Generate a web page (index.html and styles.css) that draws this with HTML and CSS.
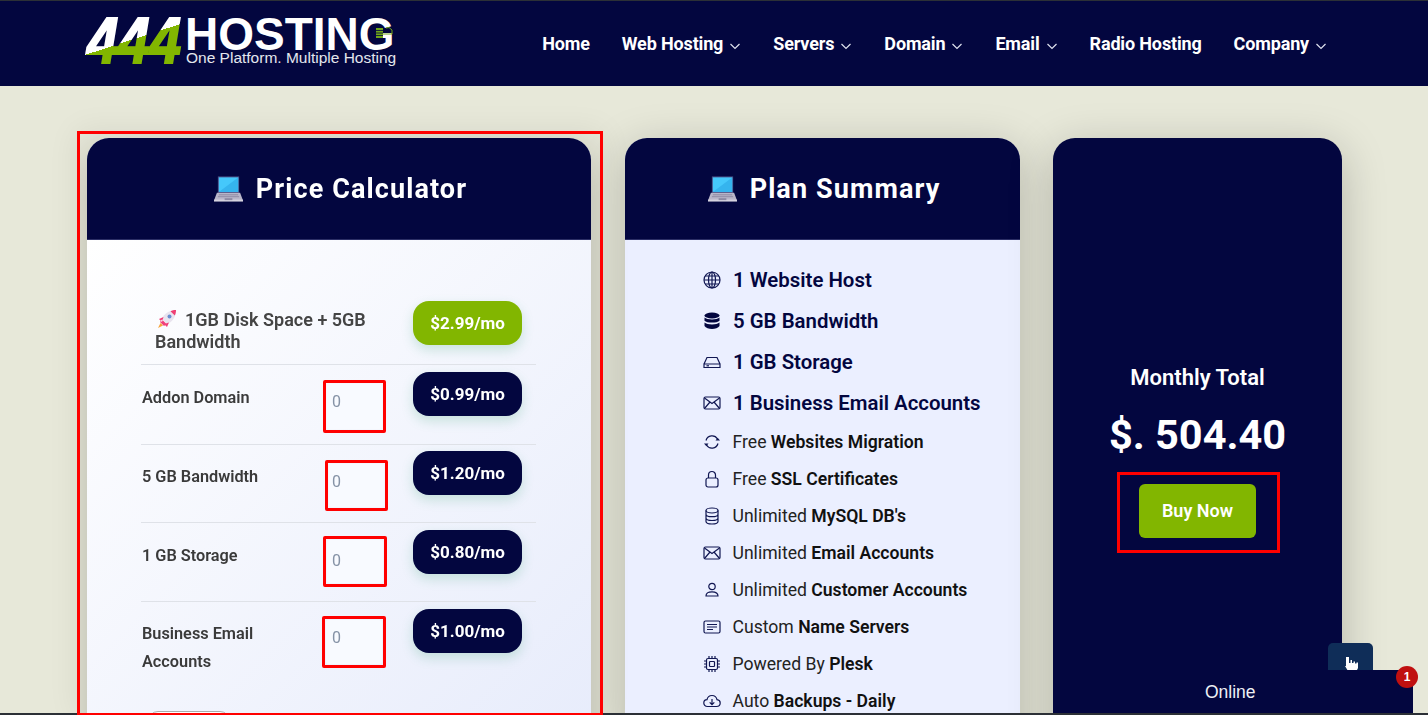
FILE: index.html
```html
<!DOCTYPE html>
<html lang="en">
<head>
    <meta charset="UTF-8">
    <meta name="viewport" content="width=device-width, initial-scale=1.0">
    <title>444 Hosting - Price Calculator</title>
    <link rel="stylesheet" href="styles.css">
</head>
<body>
    <!-- shared icons -->
    <svg class="sprite" width="0" height="0">
        <symbol id="laptop" viewBox="0 0 30 27">
            <rect x="4" y="1" width="22" height="17" fill="#4a4f86"/>
            <rect x="5" y="2" width="20" height="15" fill="#45c8fb"/>
            <path d="M5 17 L25 2 V17Z" fill="#35b4ee"/>
            <path d="M3 18 H27 L30 26 H0Z" fill="#b9b6c9"/>
            <rect x="0" y="25" width="30" height="2" fill="#d5d3df"/>
            <path d="M5 20 H25 M4 22 H26" stroke="#8d8aa3"/>
            <rect x="11" y="23.5" width="8" height="2" fill="#8d8aa3"/>
        </symbol>
        <symbol id="chevron" viewBox="0 0 12 12">
            <path d="M1.5 4 L6 8.5 L10.5 4" fill="none" stroke="currentColor" stroke-width="1.2"/>
        </symbol>
        <symbol id="envelope" viewBox="0 0 18 18">
            <rect x="1" y="3" width="16" height="12" rx="1.5" fill="none" stroke="currentColor" stroke-width="1.2"/>
            <path d="M1.5 4 L9 9.5 L16.500 4 M1.500 14.500 L7 8 M16.500 14.500 L11 8" fill="none" stroke="currentColor" stroke-width="1.2"/>
        </symbol>
    </svg>

    <header class="topbar">
        <a class="logo" href="#">
            <svg class="logo-mark" viewBox="0 0 96 48" width="96" height="48">
                <defs>
                    <linearGradient id="logoFill" gradientUnits="userSpaceOnUse" x1="50" y1="23" x2="52.6" y2="32.1">
                        <stop offset="0" stop-color="#ffffff"/>
                        <stop offset="0" stop-color="#82b600"/>
                    </linearGradient>
                </defs>
                <text class="logo-num" x="0" y="46" transform="scale(.88 1)" fill="url(#logoFill)" stroke="url(#logoFill)">444</text>
            </svg>
            <span class="logo-text">
                <span class="logo-name">HOSTING</span>
                <span class="logo-tag">One Platform. Multiple Hosting</span>
            </span>
            <svg class="logo-server" viewBox="0 0 18 14" width="18" height="14">
                <rect x="1" y="3" width="7" height="10" fill="#6fa61a"/>
                <path d="M1 5.500 H8 M1 8 H8 M1 10.500 H8" stroke="#03063f" stroke-width=".8"/>
                <path d="M8 9 H17 V5 Q14 1 11 3" fill="none" stroke="#6fa61a" stroke-width="1"/>
            </svg>
        </a>
        <nav class="nav">
            <a href="#">Home</a>
            <a href="#">Web Hosting <svg class="chev"><use href="#chevron"/></svg></a>
            <a href="#">Servers <svg class="chev"><use href="#chevron"/></svg></a>
            <a href="#">Domain <svg class="chev"><use href="#chevron"/></svg></a>
            <a href="#">Email <svg class="chev"><use href="#chevron"/></svg></a>
            <a href="#">Radio Hosting</a>
            <a href="#">Company <svg class="chev"><use href="#chevron"/></svg></a>
        </nav>
    </header>

    <main class="content">
        <div class="calc-frame">
            <section class="card">
                <h2 class="card-head"><svg class="laptop"><use href="#laptop"/></svg>Price Calculator</h2>
                <div class="calc-body">
                    <div class="row row-first">
                        <div class="row-label plan-label">
                            <svg class="rocket" viewBox="0 0 20 20" width="20" height="20">
                                <path d="M19 1 C12.500 1 7 4.500 5 10 L10 15 C15.500 13 19 7.500 19 1Z" fill="#e9e4ef"/>
                                <path d="M19 1 C17 1 15 1.500 13.500 2.200 L17.800 6.500 C18.500 5 19 3 19 1Z" fill="#ef3f73"/>
                                <circle cx="12.500" cy="7.500" r="2" fill="#6a8fd0"/>
                                <path d="M6.500 8 L2 10 L5 13Z M12 13.500 L10 18 L7 15Z M5 10.500 L9.500 15 L7 17 L3 13Z" fill="#f0417a"/>
                                <path d="M3.500 14 L6 16.500 L1 19Z" fill="#f6a33b"/>
                            </svg>1GB Disk Space + 5GB Bandwidth
                        </div>
                        <span></span>
                        <div class="price price-green">$2.99/mo</div>
                    </div>
                    <div class="row row-a">
                        <div class="row-label">Addon Domain</div>
                        <label class="mark mark-1"><input type="text" placeholder="0"></label>
                        <div class="price">$0.99/mo</div>
                    </div>
                    <div class="row row-b">
                        <div class="row-label">5 GB Bandwidth</div>
                        <label class="mark mark-2"><input type="text" placeholder="0"></label>
                        <div class="price">$1.20/mo</div>
                    </div>
                    <div class="row">
                        <div class="row-label">1 GB Storage</div>
                        <label class="mark mark-3"><input type="text" placeholder="0"></label>
                        <div class="price">$0.80/mo</div>
                    </div>
                    <div class="row row-last">
                        <div class="row-label">Business Email Accounts</div>
                        <label class="mark mark-4"><input type="text" placeholder="0"></label>
                        <div class="price">$1.00/mo</div>
                    </div>
                    <button class="reset-btn" type="button"></button>
                </div>
            </section>
        </div>

        <section class="card card-summary">
            <h2 class="card-head"><svg class="laptop"><use href="#laptop"/></svg>Plan Summary</h2>
            <ul class="plan-list">
                <li class="big">
                    <svg class="ico" viewBox="0 0 18 18"><circle cx="9" cy="9" r="8"/><ellipse cx="9" cy="9" rx="3.500" ry="8"/><path d="M9 1 V17 M1 9 H17 M2 5 H16 M2 13 H16"/></svg>
                    <span>1 Website Host</span>
                </li>
                <li class="big">
                    <svg class="ico ico-fill" viewBox="0 0 18 18"><ellipse cx="9" cy="3.500" rx="7.500" ry="3"/><path d="M1.500 5.500 C4 8 14 8 16.500 5.500 V8.700 C14 11.200 4 11.200 1.500 8.700Z"/><path d="M1.500 10.500 C4 13 14 13 16.500 10.500 V14 C14 18 4 18 1.500 14Z"/></svg>
                    <span>5 GB Bandwidth</span>
                </li>
                <li class="big">
                    <svg class="ico" viewBox="0 0 18 18"><path d="M1 11 L4 4.500 H14 L17 11 M1 11 H17 V14.500 H1Z"/><path d="M3.500 12.800 H6"/></svg>
                    <span>1 GB Storage</span>
                </li>
                <li class="big">
                    <svg class="ico"><use href="#envelope"/></svg>
                    <span>1 Business Email Accounts</span>
                </li>
                <li>
                    <svg class="ico" viewBox="0 0 18 18"><path d="M3 7.500 A6.300 6.300 0 0 1 14.500 6 M15 10.500 A6.300 6.300 0 0 1 3.500 12"/><path class="solid" d="M12.500 7.500 H17 L14.700 4.700Z M5.500 10.500 H1 L3.300 13.300Z"/></svg>
                    <span>Free <b>Websites Migration</b></span>
                </li>
                <li>
                    <svg class="ico" viewBox="0 0 18 18"><rect x="3" y="8" width="12" height="9" rx="2"/><path d="M5.500 8 V5 A3.500 3.500 0 0 1 12.500 5 V8"/></svg>
                    <span>Free <b>SSL Certificates</b></span>
                </li>
                <li>
                    <svg class="ico" viewBox="0 0 18 18"><ellipse cx="9" cy="3.500" rx="6" ry="2.500"/><path d="M3 3.500 V14.500 C3 16 6 17 9 17 C12 17 15 16 15 14.500 V3.500 M3 7.200 C3 8.700 6 9.700 9 9.700 C12 9.700 15 8.700 15 7.200 M3 11 C3 12.500 6 13.500 9 13.500 C12 13.500 15 12.500 15 11"/></svg>
                    <span>Unlimited <b>MySQL DB's</b></span>
                </li>
                <li>
                    <svg class="ico"><use href="#envelope"/></svg>
                    <span>Unlimited <b>Email Accounts</b></span>
                </li>
                <li>
                    <svg class="ico" viewBox="0 0 18 18"><circle cx="9" cy="5.500" r="3.200"/><path d="M3 15 C3 11.500 6 10.800 9 10.800 C12 10.800 15 11.500 15 15Z"/></svg>
                    <span>Unlimited <b>Customer Accounts</b></span>
                </li>
                <li>
                    <svg class="ico" viewBox="0 0 18 18"><rect x="1" y="3" width="16" height="12" rx="1.500"/><path d="M4 6.500 H14 M4 9 H14 M4 11.500 H10"/></svg>
                    <span>Custom <b>Name Servers</b></span>
                </li>
                <li>
                    <svg class="ico" viewBox="0 0 18 18"><rect x="3.500" y="3.500" width="11" height="11" rx="1.500"/><rect x="6.500" y="6.500" width="5" height="5" rx=".8"/><path d="M6 1 V3 M9 1 V3 M12 1 V3 M6 15 V17 M9 15 V17 M12 15 V17 M1 6 H3 M1 9 H3 M1 12 H3 M15 6 H17 M15 9 H17 M15 12 H17"/></svg>
                    <span>Powered By <b>Plesk</b></span>
                </li>
                <li>
                    <svg class="ico" viewBox="0 0 18 18"><path d="M4.500 14.500 C2 14.500 .8 12.800 .8 11 C.8 9 2.300 7.800 4 7.700 C4.500 5 6.700 3.500 9 3.500 C11.500 3.500 13.500 5.200 14 7.700 C16 7.900 17.200 9.300 17.200 11 C17.200 13 15.700 14.500 13.500 14.500Z"/><path d="M9 7 V12.500 M6.700 10.300 L9 12.600 L11.300 10.300"/></svg>
                    <span>Auto <b>Backups - Daily</b></span>
                </li>
            </ul>
        </section>

        <section class="card card-total">
            <h3 class="total-title">Monthly Total</h3>
            <div class="total-amount">$. 504.40</div>
            <div class="buy-mark"><button class="buy-btn" type="button">Buy Now</button></div>
        </section>
    </main>

    <button class="a11y-btn" type="button" aria-label="Accessibility">
        <svg viewBox="0 0 14 14" width="14" height="14"><path d="M1 0 H4 V6 H5.500 V3 H7 V6 H8.500 V4.500 H10 V6.500 H11.500 V5.500 H13 V11 L11.500 14 H3 L0 9 L1 9Z" fill="#fff"/></svg>
    </button>
    <div class="chat">
        <span>Online</span>
        <span class="chat-badge">1</span>
    </div>
    <div class="edge"></div>
</body>
</html>
```

FILE: styles.css
```css
html, body {
    height: 100%;
    overflow: hidden;
}

body {
    margin: 0;
    background-color: #e7e8d9;
    font-family: Roboto, "Liberation Sans", sans-serif;
    color: #222;
}

.sprite {
    display: none;
}

/* Header */
.topbar {
    height: 86px;
    box-sizing: border-box;
    border-top: 1px solid #2c3036;
    background-color: #03063f;
    display: flex;
    align-items: flex-start;
    padding-left: 87px;
}

.logo {
    display: flex;
    position: relative;
    margin-top: 16px;
    color: white;
    text-decoration: none;
    font-family: "Liberation Sans", Arial, sans-serif;
}

.logo-mark {
    display: block;
    flex: 0 0 auto;
    margin-right: 3px;
    overflow: visible;
}

.logo-num {
    font-family: "Liberation Sans", Arial, sans-serif;
    font-weight: bold;
    font-style: italic;
    font-size: 64px;
    stroke-width: 2;
}

.logo-text {
    display: flex;
    flex-direction: column;
}

.logo-name {
    font-size: 46px;
    font-weight: bold;
    line-height: 34px;
    margin-left: -1px;
}

.logo-tag {
    font-size: 15.5px;
    line-height: 13px;
    color: #e4e6ee;
    white-space: nowrap;
}

.logo-server {
    position: absolute;
    left: 288px;
    top: 8px;
}

.nav {
    display: flex;
    gap: 32px;
    margin-left: auto;
    margin-right: 101px;
    margin-top: 31px;
}

.nav a {
    color: white;
    font-size: 18px;
    font-weight: 700;
    line-height: 24px;
    letter-spacing: -0.15px;
    text-decoration: none;
    white-space: nowrap;
    display: flex;
    align-items: center;
    gap: 6px;
}

.chev {
    width: 12px;
    height: 12px;
    margin-top: 3px;
    color: #dfe2ee;
}

/* Cards */
.content {
    display: flex;
    align-items: flex-start;
    padding: 45px 0 0 77px;
}

.calc-frame {
    width: 526px;
    height: 584px;
    box-sizing: border-box;
    border: 3px solid #f00;
    border-bottom-width: 2px;
    padding: 4px 9px 0 7px;
    margin-right: 22px;
    overflow: hidden;
    position: relative;
    z-index: 1;
    box-shadow: 0 0 30px rgba(0, 0, 0, 0.07);
}

.card {
    border-radius: 22px;
    overflow: hidden;
    box-shadow: 0 10px 45px rgba(0, 0, 0, 0.22);
    background-color: #ebefff;
}

.card-head {
    height: 102px;
    box-sizing: border-box;
    margin: 0;
    padding-left: 3px;
    background-color: #03063f;
    border-bottom: 1px solid #2c2f66;
    color: white;
    font-size: 27px;
    font-weight: 700;
    letter-spacing: 1.1px;
    display: flex;
    align-items: center;
    justify-content: center;
    gap: 13px;
}

.laptop {
    width: 29px;
    height: 27px;
}

/* Calculator */
.calc-body {
    background: linear-gradient(135deg, #ffffff, #e6ebfb);
    padding: 54px 55px 40px 54px;
}

.row {
    display: grid;
    grid-template-columns: 182px 90px 109px;
    height: 79px;
    box-sizing: border-box;
    width: 395px;
    border-bottom: 1px solid #dfe2e8;
}

.row-first {
    height: 71px;
}

.row-a {
    height: 80px;
}

.row-b {
    height: 78px;
}

.row-b .price {
    margin-top: 6px;
}

.row-b .row-label {
    padding-top: 18px;
}

.row-last {
    height: 109px;
    border-bottom: none;
}

.row-label {
    font-size: 16.3px;
    font-weight: 600;
    line-height: 28px;
    color: #3a3a3a;
    padding: 19px 30px 0 1px;
}

.row-last .row-label {
    padding-top: 18px;
}

.plan-label {
    font-size: 18px;
    line-height: 22px;
    color: #444;
    padding: 15px 0 0 14px;
    width: 236px;
    margin-right: -100px;
}

.rocket {
    vertical-align: -3px;
    margin: 0 8px 0 2px;
}

.price {
    height: 44px;
    margin-top: 7px;
    border-radius: 16px;
    background-color: #03063f;
    color: white;
    font-size: 17px;
    font-weight: 700;
    display: flex;
    align-items: center;
    justify-content: center;
    box-shadow: 0 5px 12px rgba(50, 160, 110, 0.22);
}

.price-green {
    background-color: #82b600;
}

.mark {
    display: block;
    box-sizing: border-box;
    border: 3px solid #f00;
    border-radius: 2px;
    padding: 1px;
}

.mark input {
    display: block;
    width: 100%;
    height: 100%;
    box-sizing: border-box;
    border: none;
    border-radius: 3px;
    background-color: #f8faff;
    font-family: Roboto, sans-serif;
    font-size: 16px;
    color: #333;
}

.mark input::placeholder {
    color: #8592a6;
}

.mark-1 {
    width: 63px;
    height: 53px;
    margin: 15px 0 0 0;
}

.mark-1 input {
    padding: 0 0 11px 5px;
}

.mark-2 {
    width: 63px;
    height: 51px;
    margin: 15px 0 0 2px;
}

.mark-2 input {
    padding: 0 0 9px 3px;
}

.mark-3 {
    width: 64px;
    height: 51px;
    margin: 13px 0 0 0;
}

.mark-3 input {
    padding: 0 0 3px 5px;
}

.mark-4 {
    width: 64px;
    height: 52px;
    margin: 14px 0 0 -1px;
}

.mark-4 input {
    padding: 0 0 9px 6px;
}

.reset-btn {
    display: block;
    width: 82px;
    height: 40px;
    margin-left: 7px;
    background-color: white;
    border: 1px solid #aaa;
    border-radius: 10px;
}

/* Plan summary */
.card-summary {
    width: 395px;
    height: 700px;
    margin-top: 7px;
    margin-right: 33px;
}

.plan-list {
    list-style: none;
    margin: 0;
    padding: 19px 0 0 78px;
    font-size: 17.6px;
    color: #222;
}

.plan-list li {
    display: flex;
    align-items: center;
    gap: 11.5px;
    height: 37px;
    white-space: nowrap;
}

.plan-list li.big {
    height: 41px;
    gap: 12px;
    font-size: 20.4px;
    font-weight: 600;
    color: #03063f;
}

.plan-list b {
    font-weight: 600;
    color: #111;
}

.ico {
    width: 18px;
    height: 18px;
    flex: 0 0 auto;
    fill: none;
    stroke: #101652;
    stroke-width: 1.2;
    color: #101652;
}

.ico-fill {
    fill: #03063f;
    stroke: none;
}

.ico .solid {
    fill: #101652;
    stroke: none;
}

/* Monthly total */
.card-total {
    width: 289px;
    height: 700px;
    margin-top: 7px;
    background-color: #03063f;
    color: white;
    text-align: center;
    padding-top: 225px;
    box-sizing: border-box;
}

.total-title {
    margin: 0;
    font-size: 22px;
    font-weight: 600;
    line-height: 30px;
}

.total-amount {
    font-size: 41.5px;
    font-weight: 700;
    line-height: 52px;
    margin-top: 16px;
}

.buy-mark {
    width: 163px;
    height: 81px;
    box-sizing: border-box;
    border: 3px solid #f00;
    margin: 11px 0 0 64px;
    padding-top: 9px;
}

.buy-btn {
    display: block;
    width: 117px;
    height: 54px;
    margin-left: 19px;
    border: none;
    border-radius: 6px;
    background-color: #82b600;
    color: white;
    font-family: Roboto, sans-serif;
    font-size: 18px;
    font-weight: 600;
    padding-bottom: 3px;
}

/* Floating widgets */
.a11y-btn {
    position: fixed;
    right: 55px;
    top: 643px;
    width: 45px;
    height: 60px;
    box-sizing: border-box;
    border: none;
    border-radius: 5px 5px 0 0;
    background-color: #0f2d58;
    padding: 14px 0 0 17px;
    display: flex;
    align-items: flex-start;
    z-index: 2;
}

.a11y-btn svg {
    display: block;
}

.chat {
    position: fixed;
    right: 15px;
    bottom: 2px;
    width: 233px;
    height: 43px;
    box-sizing: border-box;
    padding-left: 25px;
    background-color: #03063f;
    color: #eef0f5;
    font-family: "Liberation Sans", Arial, sans-serif;
    font-size: 17.5px;
    line-height: 44px;
    z-index: 3;
}

.chat-badge {
    position: absolute;
    right: -5px;
    top: -4px;
    width: 22px;
    height: 22px;
    border-radius: 50%;
    background-color: #c01010;
    color: white;
    font-size: 12px;
    font-weight: bold;
    line-height: 22px;
    text-align: center;
}

/* dark line along the bottom of the capture */
.edge {
    position: fixed;
    left: 0;
    right: 0;
    bottom: 0;
    height: 2px;
    background-color: #2c3036;
    z-index: 0;
}
```
